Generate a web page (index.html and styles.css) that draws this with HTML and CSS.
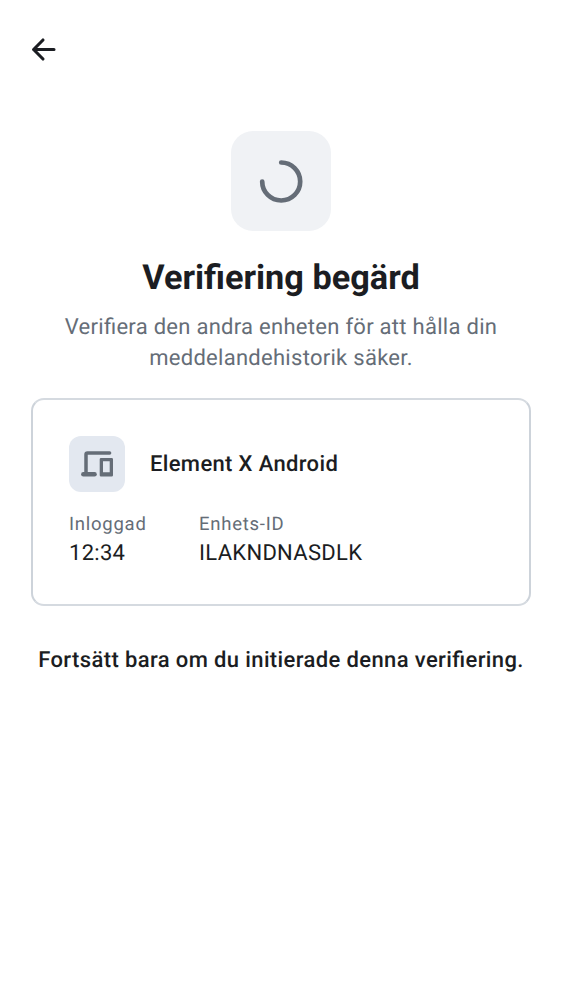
FILE: index.html
```html
<!DOCTYPE html>
<html lang="sv">
<head>
<meta charset="utf-8">
<title>Verifiering begärd</title>
<link rel="stylesheet" href="styles.css">
</head>
<body>
<main class="screen">
<header class="topbar">
<svg class="back" viewBox="0 0 25 25" fill="none" stroke="currentColor" stroke-width="3.1" stroke-linecap="round" stroke-linejoin="round"><path d="M23 12.500H2.600M12 3 2.600 12.500 12 22"/></svg>
</header>
<div class="hero"><svg class="spinner" viewBox="0 0 44 44" fill="none" stroke="currentColor" stroke-width="4.700" stroke-linecap="round"><path d="M22.200 3.500A19 19 0 1 1 3.200 22.500"/></svg></div>
<h1 class="title">Verifiering begärd</h1>
<p class="subtitle">Verifiera den andra enheten för att hålla din<br>meddelandehistorik säker.</p>
<section class="card">
<div class="device">
<div class="device-icon"><svg viewBox="0 0 32 32" fill="none" stroke="currentColor"><path d="M28.600 5H6.500Q5 5 5 6.500V25" stroke-width="3.500" stroke-linecap="round"/><path d="M2.300 26.200H13.600" stroke-width="4.400" stroke-linecap="round"/><path fill="currentColor" fill-rule="evenodd" stroke="none" d="M20 10H30.700Q32 10 32 11.300V27.200Q32 28.500 30.700 28.500H20Q18.700 28.500 18.700 27.200V11.300Q18.700 10 20 10ZM22 13.300V24.200H28.700V13.300Z"/></svg></div>
<span class="device-name">Element X Android</span>
</div>
<dl class="details">
<div class="detail"><dt>Inloggad</dt><dd>12:34</dd></div>
<div class="detail"><dt>Enhets-ID</dt><dd>ILAKNDNASDLK</dd></div>
</dl>
</section>
<p class="notice">Fortsätt bara om du initierade denna verifiering.</p>
</main>
</body>
</html>
```
FILE: styles.css
```css
* { box-sizing: border-box; margin: 0; }
body { background: #fff; color: #1b1d22; font-family: Roboto, sans-serif; font-feature-settings: "liga" 1; text-rendering: geometricPrecision; }
.screen { height: 1000px; padding: 0 31px; display: flex; flex-direction: column; }
.topbar { height: 100px; display: flex; align-items: center; padding-bottom: 1px; }
.back { width: 25px; height: 25px; }
.hero { width: 100px; height: 100px; margin: 31px auto 0; border-radius: 22px; background: #f0f2f5; color: #656d77; display: grid; place-items: center; }
.spinner { width: 44px; height: 44px; }
.title { margin-top: 27px; font-size: 34.300px; line-height: 40px; font-weight: 700; text-align: center; white-space: nowrap; }
.subtitle { margin-top: 14px; font-size: 22px; line-height: 31px; letter-spacing: .28px; text-align: center; color: #656d77; white-space: nowrap; }
.card { margin-top: 24px; height: 208px; border: 2px solid #cdd3da; border-top-color: #d5dae0; border-bottom-color: #d5dae0; border-radius: 13px; padding: 36px; }
.device { display: flex; align-items: center; gap: 25px; }
.device-icon { width: 56px; height: 56px; border-radius: 12px; background: #e3e8f0; color: #656d77; display: grid; place-items: center; }
.device-icon svg { width: 32px; height: 32px; }
.device-name { font-size: 22px; font-weight: 500; letter-spacing: .35px; }
.details { display: flex; margin-top: 20px; }
.detail { width: 130px; }
dt { font-size: 18.500px; line-height: 25px; letter-spacing: .75px; color: #656d77; }
dd { font-size: 22px; line-height: 34px; letter-spacing: .3px; }
.notice { margin-top: 39px; font-size: 22px; line-height: 31px; font-weight: 500; letter-spacing: .38px; text-align: center; white-space: nowrap; }
```
